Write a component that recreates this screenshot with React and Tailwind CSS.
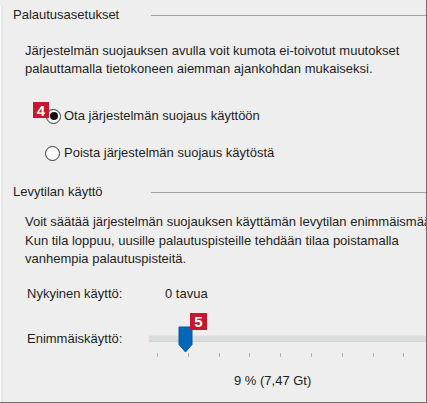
import React from "react";

function Radio({ checked }) {
  return (
    <span className="w-[15px] h-[15px] rounded-full border border-[#333333] bg-white flex items-center justify-center shrink-0">
      {checked && <span className="w-[8px] h-[8px] rounded-full bg-[#111111]" />}
    </span>
  );
}

function Badge({ n, className }) {
  return (
    <span
      className={
        "absolute bg-[#c8162c] text-white font-bold text-[15px] leading-none flex items-center justify-center " +
        className
      }
    >
      {n}
    </span>
  );
}

function Header({ children, className }) {
  return (
    <div className={"flex items-center h-[18px] pl-[12px] " + className}>
      <span className="w-[138px] shrink-0 whitespace-nowrap">{children}</span>
      <div className="flex-1 h-px bg-[#a3a3a3]" />
    </div>
  );
}

export default function App() {
  const ticks = [0, 1, 2, 3, 4, 5, 6, 7, 8, 9];
  return (
    <div
      className="w-[427px] h-[403px] bg-[#eeeeee] overflow-hidden border-r border-b border-[#6f6f6f] text-[13px] text-[#1e1e1e]"
      style={{ fontFamily: '"Liberation Sans", Arial, sans-serif' }}
    >
      <div className="h-full border-l-[3px] border-[#e6e6e6] ml-0">
        <div className="h-full border-l border-[#fafafa] -ml-[3px] pl-0">
          <Header className="pt-0 mt-[6px]">Palautusasetukset</Header>
          <div className="mt-[18px] pl-[24px] leading-[18px] whitespace-nowrap">
            <div>Järjestelmän suojauksen avulla voit kumota ei-toivotut muutokset</div>
            <div>palauttamalla tietokoneen aiemman ajankohdan mukaiseksi.</div>
          </div>

          <div className="relative mt-[29px] h-[18px] pl-[45px] flex items-center gap-[3px]">
            <Radio checked />
            <span className="whitespace-nowrap">Ota järjestelmän suojaus käyttöön</span>
            <Badge n="4" className="left-[32px] -top-[5px] w-[16px] h-[16px]" />
          </div>
          <div className="mt-[19px] h-[18px] pl-[44px] flex items-center gap-[4px]">
            <Radio />
            <span className="whitespace-nowrap">Poista järjestelmän suojaus käytöstä</span>
          </div>

          <Header className="mt-[21px]">Levytilan käyttö</Header>
          <div className="mt-[12px] pl-[24px] leading-[18.5px] whitespace-nowrap">
            <div>Voit säätää järjestelmän suojauksen käyttämän levytilan enimmäismäärän.</div>
            <div>Kun tila loppuu, uusille palautuspisteille tehdään tilaa poistamalla</div>
            <div>vanhempia palautuspisteitä.</div>
          </div>

          <div className="mt-[16px] h-[18px] leading-[18px] pl-[26px] flex">
            <span className="w-[138px] shrink-0">Nykyinen käyttö:</span>
            <span>0 tavua</span>
          </div>

          <div className="mt-[27px] pl-[26px] flex">
            <span className="w-[122px] shrink-0 leading-[18px]">Enimmäiskäyttö:</span>
            <div className="relative flex-1 flex flex-col">
              <div className="mt-[5px] h-[7px] bg-[#dadddd] border-t border-[#e6e8e8] border-b border-b-[#d0d3d3] w-[300px]" />
              <div className="mt-[11px] h-[4px] pl-[8px] flex gap-[29.8px]">
                {ticks.map((t) => (
                  <span key={t} className="w-px h-[4px] bg-[#b0b0b0] shrink-0" />
                ))}
              </div>
              <div className="mt-[15px] pl-[85px] leading-[18px] whitespace-nowrap">9 % (7,47 Gt)</div>
              <svg
                className="absolute left-[29px] -top-[4px]"
                width="15"
                height="27"
                viewBox="0 0 15 27"
              >
                <path d="M1 1 H14 V18.5 L7.5 26 L1 18.5 Z" fill="#0067b9" stroke="#005a9e" strokeWidth="1" />
              </svg>
              <Badge n="5" className="left-[41px] -top-[17px] w-[17px] h-[17px]" />
            </div>
          </div>
        </div>
      </div>
    </div>
  );
}
